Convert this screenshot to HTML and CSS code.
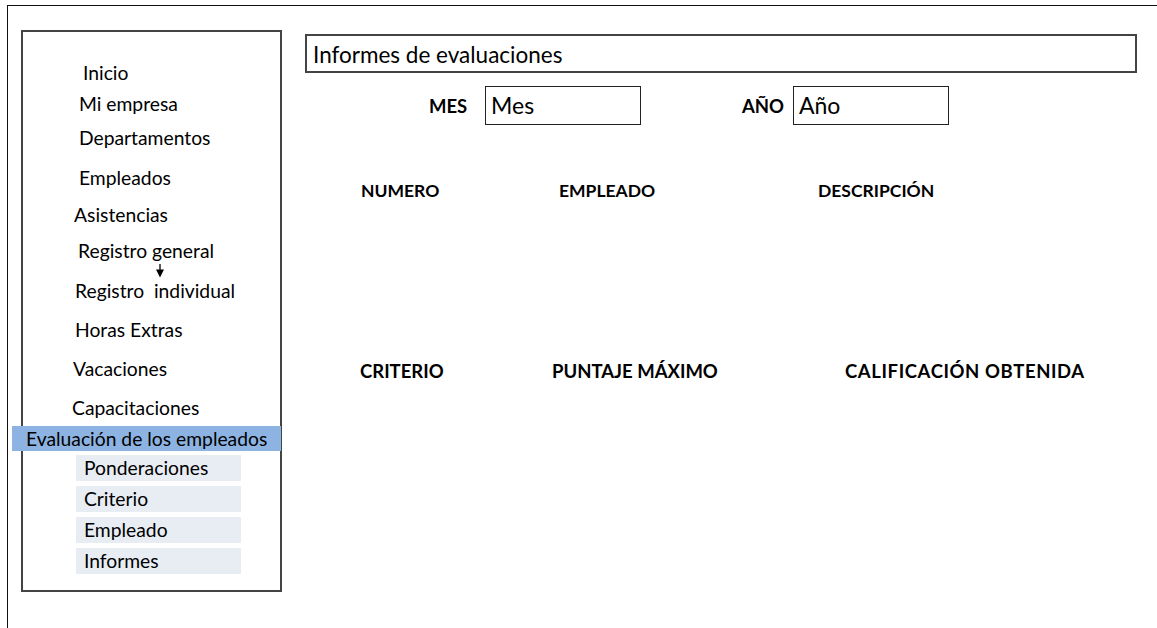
FILE: index.html
```html
<!DOCTYPE html>
<html lang="es">
<head>
<meta charset="utf-8">
<title>Informes de evaluaciones</title>
<link rel="stylesheet" href="styles.css">
</head>
<body>
<div class="frame">
  <nav class="sidebar">
    <div class="nav-item i-inicio">Inicio</div>
    <div class="nav-item i-empresa">Mi empresa</div>
    <div class="nav-item i-deptos">Departamentos</div>
    <div class="nav-item i-empleados">Empleados</div>
    <div class="nav-item i-asist">Asistencias</div>
    <div class="nav-item i-reggen">Registro general</div>
    <div class="nav-arrow">
      <svg width="10" height="14" viewBox="0 0 10 14"><line x1="5" y1="0" x2="5" y2="7" stroke="#000" stroke-width="1.3"/><polygon points="1,5.5 9,5.5 5,13.5" fill="#000"/></svg>
    </div>
    <div class="nav-item i-regind">Registro&nbsp; individual</div>
    <div class="nav-item i-horas">Horas Extras</div>
    <div class="nav-item i-vac">Vacaciones</div>
    <div class="nav-item i-capac">Capacitaciones</div>
    <div class="nav-active">Evaluación de los empleados</div>
    <div class="submenu">
      <div class="sub-item">Ponderaciones</div>
      <div class="sub-item">Criterio</div>
      <div class="sub-item">Empleado</div>
      <div class="sub-item">Informes</div>
    </div>
  </nav>
  <main class="main">
    <div class="title-box">Informes de evaluaciones</div>
    <div class="filters">
      <span class="f-label f-mes">MES</span>
      <div class="f-box">Mes</div>
      <span class="f-label f-anio">AÑO</span>
      <div class="f-box">Año</div>
    </div>
    <div class="cols cols-1">
      <span class="c-num">NUMERO</span>
      <span class="c-emp">EMPLEADO</span>
      <span>DESCRIPCIÓN</span>
    </div>
    <div class="cols cols-2">
      <span class="c-crit">CRITERIO</span>
      <span class="c-punt">PUNTAJE MÁXIMO</span>
      <span class="c-calif">CALIFICACIÓN OBTENIDA</span>
    </div>
  </main>
</div>
</body>
</html>
```
FILE: styles.css
```css
* { box-sizing: border-box; }
html, body {
  margin: 0;
  padding: 0;
  background: #fff;
  overflow: hidden;
}
body {
  font-family: Lato, "Liberation Sans", sans-serif;
  color: #000;
}
.frame {
  margin: 5px 0 0 7px;
  height: 640px;
  border-top: 1.5px solid #111;
  border-left: 1.5px solid #111;
  display: flex;
  align-items: flex-start;
  padding: 24px 0 0 13px;
}
.sidebar {
  width: 261px;
  height: 562px;
  border: 2px solid #444;
  flex-shrink: 0;
  padding-top: 29px;
  font-size: 19.3px;
}
.nav-item {
  height: 24px;
  line-height: 24px;
  white-space: nowrap;
}
.i-inicio { padding-left: 60px; }
.i-empresa { padding-left: 56px; margin-top: 7px; }
.i-deptos { padding-left: 56px; margin-top: 10px; }
.i-empleados { padding-left: 56px; margin-top: 16px; }
.i-asist { padding-left: 51px; margin-top: 13px; }
.i-reggen { padding-left: 55px; margin-top: 12px; }
.nav-arrow {
  height: 14px;
  margin-top: 1px;
  padding-left: 132px;
  line-height: 0;
}
.i-regind { padding-left: 52px; margin-top: 1px; }
.i-horas { padding-left: 52px; margin-top: 15px; }
.i-vac { padding-left: 50px; margin-top: 15px; }
.i-capac { padding-left: 49px; margin-top: 15px; }
.nav-active {
  margin: 6px 0 0 -11px;
  width: 269px;
  height: 25px;
  line-height: 25px;
  background: #8db3e2;
  padding-left: 14px;
  white-space: nowrap;
}
.submenu {
  margin: 4px 0 0 53px;
  width: 165px;
  display: flex;
  flex-direction: column;
  gap: 5px;
}
.sub-item {
  height: 26px;
  line-height: 26px;
  background: #e8edf4;
  padding-left: 8px;
}
.main {
  margin-left: 23px;
  padding-top: 4px;
  width: 832px;
}
.title-box {
  height: 39px;
  border: 2px solid #444;
  font-size: 22.5px;
  line-height: 38px;
  padding-left: 6px;
}
.filters {
  display: flex;
  align-items: center;
  margin-top: 13px;
  padding-left: 124px;
}
.f-label {
  font-weight: 700;
  font-size: 18.5px;
}
.f-mes { width: 56px; }
.f-anio { margin-left: 101px; width: 51px; }
.f-box {
  width: 156px;
  height: 39px;
  border: 1.5px solid #222;
  font-size: 23px;
  line-height: 37px;
  padding-left: 5px;
}
.cols {
  display: flex;
  font-weight: 700;
  white-space: nowrap;
}
.cols-1 { margin-top: 55px; padding-left: 56px; font-size: 17.5px; }
.cols-2 { margin-top: 159px; padding-left: 55px; font-size: 18.5px; }
.c-num { width: 198px; }
.c-emp { width: 259px; }
.c-crit { width: 192px; }
.c-punt { width: 293px; }
.c-calif { letter-spacing: 0.6px; }
```
